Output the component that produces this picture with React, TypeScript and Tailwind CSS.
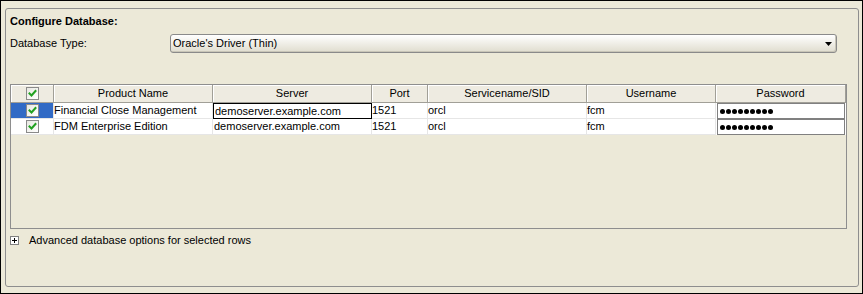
import React from "react";

const font = { fontFamily: '"Liberation Sans", Arial, sans-serif' };

function Check() {
  return (
    <div className="w-[13px] h-[13px] border border-[#8A8A8A] bg-gradient-to-br from-[#E8E8E2] to-white flex items-center justify-center">
      <svg width="11" height="11" viewBox="0 0 11 11">
        <path d="M2.5 5.5 L4.5 7.5 L8.5 3" stroke="#21A121" strokeWidth="2" fill="none" strokeLinecap="square" />
      </svg>
    </div>
  );
}

function Dots() {
  return (
    <div className="flex gap-[1px] pl-[2px]">
      {Array.from({ length: 9 }).map((_, i) => (
        <span key={i} className="w-[5px] h-[5px] rounded-full bg-black" />
      ))}
    </div>
  );
}

const cols = "grid grid-cols-[43px_159px_159px_56px_159px_129px_130px]";

export default function App() {
  const headers = ["", "Product Name", "Server", "Port", "Servicename/SID", "Username", "Password"];
  const rows = [
    { name: "Financial Close Management", selected: true },
    { name: "FDM Enterprise Edition", selected: false },
  ];
  return (
    <div
      className="w-[863px] h-[294px] border border-black bg-[#ECE9D8] pl-[4px] pr-[3px] pt-[7px] pb-[6px] text-[11px] text-black"
      style={font}
    >
      <div className="h-full border border-[#8E8E8E] rounded-[3px] pl-[4px] pr-[10px] pt-[6px] flex flex-col">
        <div className="h-[13px] leading-[13px] font-bold text-[11px]">Configure Database:</div>
        <div className="mt-[6px] flex items-center h-[19px]">
          <div className="w-[160px] leading-[13px]">Database Type:</div>
          <div className="w-[667px] h-[19px] border border-[#8A8A8A] rounded-[3px] bg-gradient-to-b from-white to-[#E0DDCF] flex items-center pl-[2px] pr-[4px] shadow-[inset_-1px_-1px_0_#C9C6B8]">
            <span className="flex-1 leading-[13px]">Oracle's Driver (Thin)</span>
            <svg width="7" height="4" viewBox="0 0 7 4">
              <path d="M0 0 H7 L3.5 4 Z" fill="black" />
            </svg>
          </div>
        </div>
        <div className="mt-[31px] w-[837px] h-[145px] border border-[#8E8E8E] bg-[#ECE9D8] flex flex-col">
          <div className={cols}>
            {headers.map((h, i) => (
              <div
                key={i}
                className="h-[18px] border-r border-b border-[#A19F97] shadow-[inset_1px_1px_0_#FFFFFF] bg-[#EEEBE1] flex items-center justify-center leading-[13px]"
              >
                {i === 0 ? <Check /> : h}
              </div>
            ))}
          </div>
          {rows.map((r, ri) => (
            <div key={ri} className={cols}>
              <div
                className={`h-[16px] border-r border-b border-[#E6E6E6] flex items-center justify-center ${
                  r.selected ? "bg-[#316AC5]" : "bg-white"
                }`}
              >
                <Check />
              </div>
              <div className="h-[16px] border-r border-b border-[#E6E6E6] bg-white flex items-center leading-[13px] whitespace-nowrap overflow-hidden">
                {r.name}
              </div>
              <div
                className={`h-[16px] bg-white flex items-center leading-[13px] pl-[1px] whitespace-nowrap overflow-hidden ${
                  r.selected ? "border border-black" : "border-r border-b border-[#E6E6E6]"
                }`}
              >
                demoserver.example.com
              </div>
              <div className="h-[16px] border-r border-b border-[#E6E6E6] bg-white flex items-center leading-[13px]">
                1521
              </div>
              <div className="h-[16px] border-r border-b border-[#E6E6E6] bg-white flex items-center leading-[13px]">
                orcl
              </div>
              <div className="h-[16px] border-r border-b border-[#E6E6E6] bg-white flex items-center leading-[13px]">
                fcm
              </div>
              <div className="h-[16px] pl-[1px] pr-[1px] bg-white flex items-center">
                <div className="w-full h-[16px] border border-[#808080] bg-white flex items-center">
                  <Dots />
                </div>
              </div>
            </div>
          ))}
        </div>
        <div className="mt-[5px] flex items-center h-[13px]">
          <div className="w-[9px] h-[9px] border border-[#808080] bg-white relative mr-[10px]">
            <span className="absolute left-[1px] top-[3px] w-[5px] h-[1px] bg-black" />
            <span className="absolute left-[3px] top-[1px] w-[1px] h-[5px] bg-black" />
          </div>
          <span className="leading-[13px]">Advanced database options for selected rows</span>
        </div>
      </div>
    </div>
  );
}
